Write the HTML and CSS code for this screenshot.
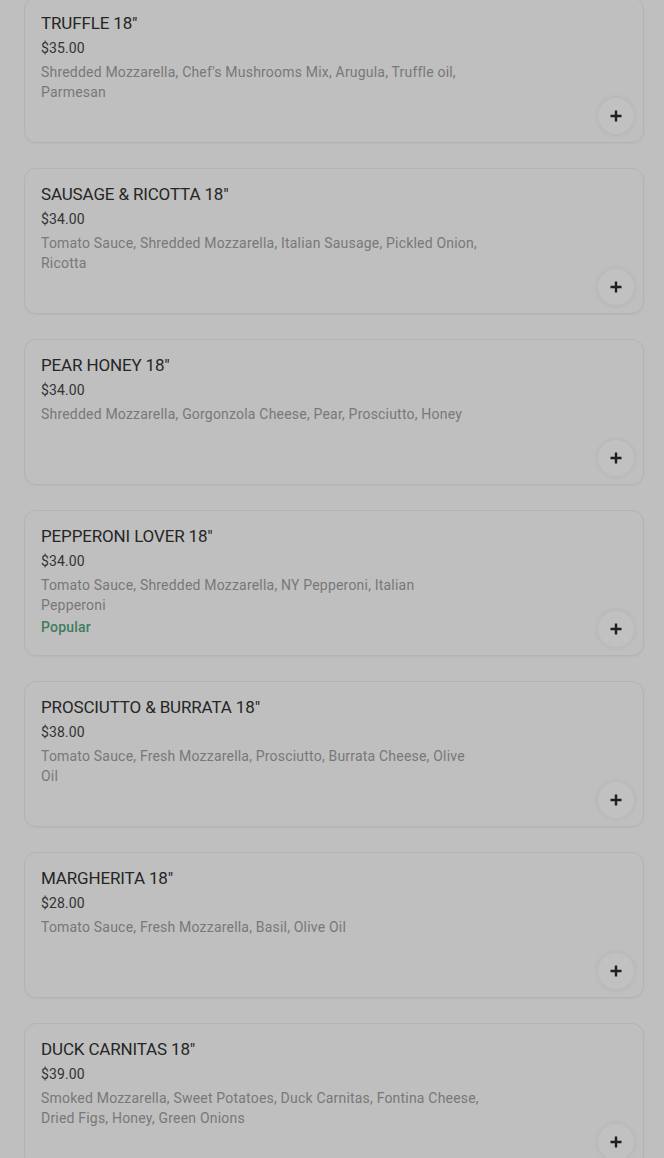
FILE: index.html
```html
<!DOCTYPE html>
<html lang="en">
  <head>
    <meta charset="UTF-8" />
    <meta name="viewport" content="width=device-width, initial-scale=1.0" />
    <title>Pizza Menu</title>
    <link rel="stylesheet" href="styles.css">
  </head>
  <body>
    <div class="menu-list">
      <div class="item-card">
        <div class="item-info">
          <h3 class="item-name">TRUFFLE 18"</h3>
          <div class="item-price">$35.00</div>
          <p class="item-desc">Shredded Mozzarella, Chef's Mushrooms Mix, Arugula, Truffle oil, Parmesan</p>
        </div>
        <button class="add-btn" aria-label="Add">
          <svg viewBox="0 0 12 12" width="12" height="12"><path d="M6 0.5v11M0.5 6h11" /></svg>
        </button>
      </div>

      <div class="item-card">
        <div class="item-info">
          <h3 class="item-name">SAUSAGE &amp; RICOTTA 18"</h3>
          <div class="item-price">$34.00</div>
          <p class="item-desc">Tomato Sauce, Shredded Mozzarella, Italian Sausage, Pickled Onion, Ricotta</p>
        </div>
        <button class="add-btn" aria-label="Add">
          <svg viewBox="0 0 12 12" width="12" height="12"><path d="M6 0.5v11M0.5 6h11" /></svg>
        </button>
      </div>

      <div class="item-card">
        <div class="item-info">
          <h3 class="item-name">PEAR HONEY 18"</h3>
          <div class="item-price">$34.00</div>
          <p class="item-desc">Shredded Mozzarella, Gorgonzola Cheese, Pear, Prosciutto, Honey</p>
        </div>
        <button class="add-btn" aria-label="Add">
          <svg viewBox="0 0 12 12" width="12" height="12"><path d="M6 0.5v11M0.5 6h11" /></svg>
        </button>
      </div>

      <div class="item-card">
        <div class="item-info">
          <h3 class="item-name">PEPPERONI LOVER 18"</h3>
          <div class="item-price">$34.00</div>
          <p class="item-desc">Tomato Sauce, Shredded Mozzarella, NY Pepperoni, Italian Pepperoni</p>
          <div class="item-tag">Popular</div>
        </div>
        <button class="add-btn" aria-label="Add">
          <svg viewBox="0 0 12 12" width="12" height="12"><path d="M6 0.5v11M0.5 6h11" /></svg>
        </button>
      </div>

      <div class="item-card">
        <div class="item-info">
          <h3 class="item-name">PROSCIUTTO &amp; BURRATA 18"</h3>
          <div class="item-price">$38.00</div>
          <p class="item-desc">Tomato Sauce, Fresh Mozzarella, Prosciutto, Burrata Cheese, Olive Oil</p>
        </div>
        <button class="add-btn" aria-label="Add">
          <svg viewBox="0 0 12 12" width="12" height="12"><path d="M6 0.5v11M0.5 6h11" /></svg>
        </button>
      </div>

      <div class="item-card">
        <div class="item-info">
          <h3 class="item-name">MARGHERITA 18"</h3>
          <div class="item-price">$28.00</div>
          <p class="item-desc">Tomato Sauce, Fresh Mozzarella, Basil, Olive Oil</p>
        </div>
        <button class="add-btn" aria-label="Add">
          <svg viewBox="0 0 12 12" width="12" height="12"><path d="M6 0.5v11M0.5 6h11" /></svg>
        </button>
      </div>

      <div class="item-card">
        <div class="item-info">
          <h3 class="item-name">DUCK CARNITAS 18"</h3>
          <div class="item-price">$39.00</div>
          <p class="item-desc">Smoked Mozzarella, Sweet Potatoes, Duck Carnitas, Fontina Cheese, Dried Figs, Honey, Green Onions</p>
        </div>
        <button class="add-btn" aria-label="Add">
          <svg viewBox="0 0 12 12" width="12" height="12"><path d="M6 0.5v11M0.5 6h11" /></svg>
        </button>
      </div>
    </div>
  </body>
</html>
```

FILE: styles.css
```css
* {
  margin: 0;
  padding: 0;
  box-sizing: border-box;
}

body {
  font-family: Roboto, "Liberation Sans", sans-serif;
  background: #bfbfbf;
  color: #262626;
  overflow: hidden;
}

.menu-list {
  display: flex;
  flex-direction: column;
  gap: 25px;
  margin-top: -3px;
  padding: 0 20px 0 24px;
}

.item-card {
  position: relative;
  height: 146px;
  border: 1px solid #b3b3b3;
  border-radius: 12px;
  padding: 14px 16px;
  box-shadow: 0 1px 2px rgba(0, 0, 0, 0.04);
}

.item-info {
  max-width: 440px;
}

.item-name {
  font-size: 17px;
  font-weight: 400;
  line-height: 22px;
  letter-spacing: -0.15px;
  color: #262626;
}

.item-price {
  margin-top: 4px;
  font-size: 14px;
  line-height: 20px;
  letter-spacing: 0.1px;
  color: #333;
}

.item-desc {
  margin-top: 4px;
  font-size: 14px;
  line-height: 20px;
  letter-spacing: 0.2px;
  color: #787878;
}

.item-tag {
  margin-top: 2px;
  font-size: 14px;
  font-weight: 500;
  line-height: 20px;
  letter-spacing: 0.2px;
  color: #3f7d5d;
}

/* round add button in the card corner */
.add-btn {
  position: absolute;
  right: 9px;
  bottom: 8px;
  width: 36px;
  height: 36px;
  border: none;
  border-radius: 50%;
  background: #c1c1c1;
  box-shadow: 0 0 6px rgba(0, 0, 0, 0.07);
  display: flex;
  align-items: center;
  justify-content: center;
}

.add-btn svg path {
  stroke: #1f1f1f;
  stroke-width: 2.4;
  fill: none;
}
```
